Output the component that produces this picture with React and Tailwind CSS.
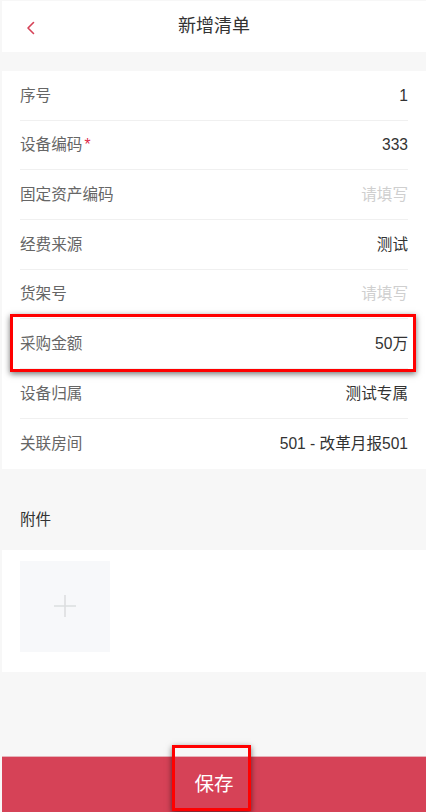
import React from 'react';

const rows = [
  { label: '序号', value: '1' },
  { label: '设备编码', value: '333', required: true },
  { label: '固定资产编码', placeholder: '请填写' },
  { label: '经费来源', value: '测试' },
  { label: '货架号', placeholder: '请填写' },
  { label: '采购金额', value: '50万', marked: true },
  { label: '设备归属', value: '测试专属' },
  { label: '关联房间', value: '501 - 改革月报501', last: true },
];

function Row({ row }) {
  return (
    <div className="relative pl-[18px] pr-[18px]">
      <div className={`flex h-[49.7px] items-center justify-between ${row.last ? '' : 'border-b border-[#f0f0f0]'}`}>
        <span className="text-[15.6px] text-[#666]">
          {row.label}
          {row.required && <span className="ml-[2px] text-[#e0294a]">*</span>}
        </span>
        {row.value ? (
          <span className="text-[15.6px] text-[#333]">{row.value}</span>
        ) : (
          <span className="text-[15.6px] text-[#cfcfcf]">{row.placeholder}</span>
        )}
      </div>
      {row.marked && (
        <div className="pointer-events-none absolute left-[8px] right-[10px] top-[-5px] h-[58px] border-[3px] border-[#ff0000] shadow-[0_2px_6px_rgba(0,0,0,0.55)]" />
      )}
    </div>
  );
}

export default function App() {
  return (
    <div
      className="flex h-[812px] w-[426px] flex-col overflow-hidden bg-[#f7f7f7] pl-[2px] pt-[1px]"
      style={{ fontFamily: '"Liberation Sans", "Noto Sans CJK SC", sans-serif' }}
    >
      {/* header */}
      <div className="relative flex h-[51px] items-center justify-center bg-white">
        <svg className="absolute left-[23px] top-[20px]" width="12" height="14" viewBox="0 0 12 14" fill="none">
          <path d="M8.5 1.5 L3 7 L8.5 12.5" stroke="#d64257" strokeWidth="1.6" strokeLinecap="round" strokeLinejoin="round" />
        </svg>
        <span className="text-[18px] text-[#333]">新增清单</span>
      </div>

      {/* form list */}
      <div className="mt-[19px] bg-white">
        {rows.map((r) => (
          <Row key={r.label} row={r} />
        ))}
      </div>

      {/* attachment */}
      <div className="flex h-[81px] items-center pl-[18px] pt-[22px]">
        <span className="text-[15.6px] text-[#333]">附件</span>
      </div>
      <div className="h-[122px] bg-white pl-[18px] pt-[11px]">
        <div className="flex h-[91px] w-[90px] items-center justify-center bg-[#f7f8fa]">
          <svg width="24" height="24" viewBox="0 0 24 24" fill="none">
            <path d="M12 1 V23 M1 12 H23" stroke="#dcdee0" strokeWidth="1.6" />
          </svg>
        </div>
      </div>

      <div className="flex-1" />

      {/* save bar */}
      <div className="relative flex h-[56px] items-center justify-center border-t border-[#e6b3ba] bg-[#d64257]">
        <span className="text-[19.5px] text-white">保存</span>
        <div className="pointer-events-none absolute left-[170px] top-[-12px] h-[66px] w-[79px] border-[3px] border-[#ff0000] shadow-[0_2px_6px_rgba(0,0,0,0.55)]" />
      </div>
    </div>
  );
}
